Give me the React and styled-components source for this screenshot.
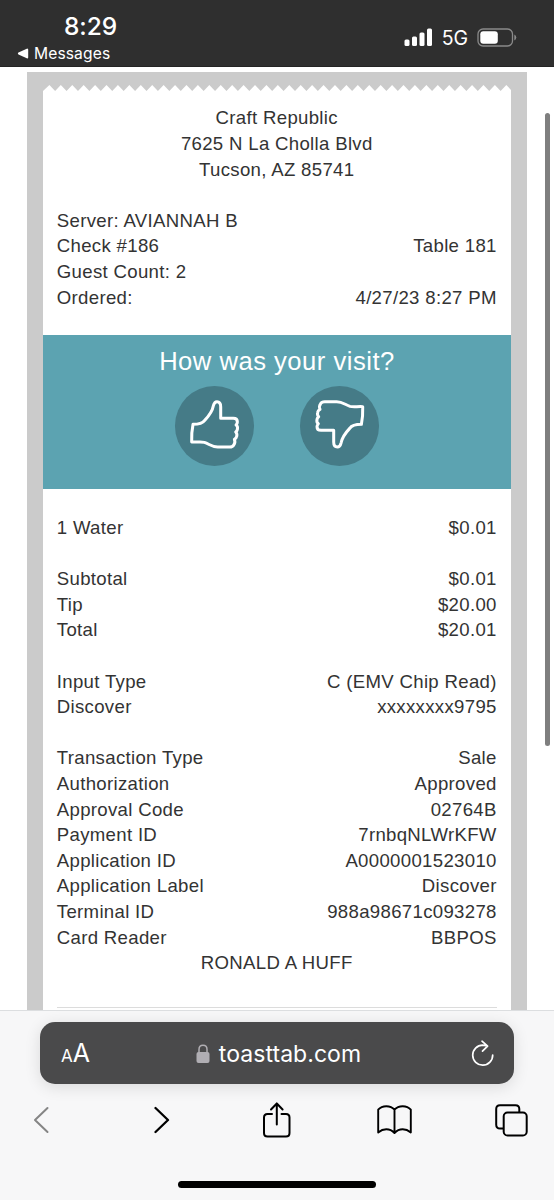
import styled, { createGlobalStyle } from "styled-components";

const colors = {
  chrome: "#2f2f2f",
  frame: "#cbcbcb",
  text: "#333",
  teal: "#5ca3b1",
  tealDark: "#457b87",
  address: "#4a4a4b",
  toolbar: "#f7f7f8",
};

const GlobalStyle = createGlobalStyle`
  * { box-sizing: border-box; }
  body {
    margin: 0;
    background: #fff;
    font-family: "Liberation Sans", Arial, sans-serif;
  }
`;

const Screen = styled.div`
  display: flex;
  flex-direction: column;
  width: 554px;
  height: 1200px;
  overflow: hidden;
`;

const StatusBar = styled.header`
  display: flex;
  justify-content: space-between;
  height: 67px;
  flex: none;
  background: ${colors.chrome};
  border-bottom: 1px solid #242424;
  color: #fff;
  font-family: Inter, sans-serif;
`;

const StatusLeft = styled.div`
  padding: 11px 0 0 17px;
`;

const Clock = styled.div`
  padding-left: 47px;
  font-size: 24.5px;
  line-height: 30px;
  font-weight: 500;
  letter-spacing: -0.1px;
`;

const BackLink = styled.div`
  display: flex;
  align-items: center;
  gap: 5px;
  font-size: 15.6px;
  line-height: 25px;
  letter-spacing: 0.12px;
`;

const StatusRight = styled.div`
  display: flex;
  align-items: center;
  height: 27px;
  margin-top: 23.5px;
  padding-right: 37px;
`;

const Network = styled.span`
  margin: 0 9px 0 9px;
  padding-top: 1px;
  font-size: 19.5px;
  letter-spacing: -0.1px;
`;

const Page = styled.main`
  position: relative;
  height: 943px;
  flex: none;
  padding: 5px 27px 0;
  overflow: hidden;
`;

const Frame = styled.div`
  height: 100%;
  padding: 13px 15.7px 0 15.6px;
  background: ${colors.frame};
`;

const TornEdge = styled.svg`
  display: block;
  width: 100%;
  height: 6px;
`;

const Paper = styled.section`
  height: 100%;
  padding-top: 14.4px;
  background: #fff;
  color: ${colors.text};
  font-size: 18.6px;
  line-height: 25.6px;
  letter-spacing: 0.32px;
`;

const Lines = styled.div`
  padding: 0 14.6px 25.6px 14.2px;
`;

const Row = styled.div`
  display: flex;
  justify-content: space-between;
  min-height: 25.6px;
  white-space: nowrap;
`;

const Centered = styled.div`
  text-align: center;
`;

const Survey = styled.div`
  height: 153.4px;
  margin: -0.6px 0 26.5px;
  padding-top: 9.8px;
  background: ${colors.teal};
  color: #fff;
  text-align: center;
`;

const Question = styled.div`
  font-size: 25.6px;
  line-height: 32px;
  letter-spacing: 0.5px;
`;

const Votes = styled.div`
  display: flex;
  justify-content: center;
  gap: 45.6px;
  margin-top: 9.4px;
`;

const Vote = styled.button`
  width: 79.4px;
  height: 79.4px;
  padding: 0;
  border: none;
  border-radius: 50%;
  background: ${colors.tealDark};

  svg {
    display: block;
    width: 100%;
    height: 100%;
  }
`;

const Divider = styled.hr`
  height: 1px;
  margin: 6px 14px 0;
  border: none;
  background: #dcdcdc;
`;

const ScrollThumb = styled.div`
  position: absolute;
  top: 46px;
  right: 4px;
  width: 5px;
  height: 633px;
  border-radius: 3px;
  background: #7f7f7f;
`;

const BottomBar = styled.footer`
  flex: 1;
  padding: 11px 40px 0;
  border-top: 1px solid #dcdee0;
  background: ${colors.toolbar};
`;

const AddressBar = styled.div`
  display: grid;
  grid-template-columns: 1fr auto 1fr;
  align-items: center;
  height: 62px;
  padding: 0 20px 0 21px;
  border-radius: 15px;
  background: ${colors.address};
  box-shadow: 0 3px 16px rgba(0, 0, 0, 0.12);
  color: #fff;
  font-family: Inter, sans-serif;
`;

const TextSize = styled.div`
  font-size: 25px;
  line-height: 30px;
  padding-top: 3px;

  small {
    font-size: 17px;
  }
`;

const Domain = styled.div`
  display: flex;
  align-items: center;
  gap: 9px;
  padding: 2px 0 0 2px;
  font-size: 23px;
  letter-spacing: 0.05px;
`;

const Reload = styled.svg`
  justify-self: end;
`;

const Tools = styled.nav`
  display: flex;
  justify-content: space-between;
  align-items: center;
  height: 40px;
  margin: 16px -15px 0 -17px;
`;

const Tool = styled.span`
  display: flex;
  justify-content: center;
  width: 36px;
  padding-left: ${({ $nudge = 0 }) => $nudge}px;
`;

const HomeIndicator = styled.div`
  width: 198px;
  height: 7px;
  margin: 41px auto 0;
  border-radius: 4px;
  background: #000;
`;

const TEETH = 41;
const TOOTH = 11.43;

function teethPath() {
  let d = "M0 6";
  for (let i = 0; i < TEETH; i++) {
    d += ` L${i * TOOTH + 6.4} 0 L${(i + 1) * TOOTH + 0.7} 6`;
  }
  return `${d} V6 Z`;
}

function Thumb({ down }) {
  return (
    <svg viewBox="0 0 238 238" fill="none" stroke="#fff" strokeWidth="9" strokeLinejoin="round">
      <path
        transform={down ? "rotate(180 119 115)" : undefined}
        d="M50 168 Q49 140 54 115 C70 115 82 113 89 103 C104 87 112 76 115 59 C117 51 119 47 126 47 C134 47 137 52 137 62 V97 H175 Q187 97 187 108 Q187 113 183 117 Q189 120 187 130 Q186 135 182 138 Q187 143 185 151 Q184 157 178 160 Q182 169 176 177 Q173 183 164 183 H128 C111 183 103 174 88 169 C78 166 66 169 50 168 Z"
      />
    </svg>
  );
}

const server = [
  ["Server: AVIANNAH B", ""],
  ["Check #186", "Table 181"],
  ["Guest Count: 2", ""],
  ["Ordered:", "4/27/23 8:27 PM"],
];

const sections = [
  [["1 Water", "$0.01"]],
  [
    ["Subtotal", "$0.01"],
    ["Tip", "$20.00"],
    ["Total", "$20.01"],
  ],
  [
    ["Input Type", "C (EMV Chip Read)"],
    ["Discover", "xxxxxxxx9795"],
  ],
  [
    ["Transaction Type", "Sale"],
    ["Authorization", "Approved"],
    ["Approval Code", "02764B"],
    ["Payment ID", "7rnbqNLWrKFW"],
    ["Application ID", "A0000001523010"],
    ["Application Label", "Discover"],
    ["Terminal ID", "988a98671c093278"],
    ["Card Reader", "BBPOS"],
  ],
];

function Rows({ items }) {
  return items.map(([label, value]) => (
    <Row key={label}>
      <span>{label}</span>
      <span>{value}</span>
    </Row>
  ));
}

function PhoneStatus() {
  return (
    <StatusBar>
      <StatusLeft>
        <Clock>8:29</Clock>
        <BackLink>
          <svg width="12" height="11" viewBox="0 0 12 11">
            <path d="M1.9 5.5 L10.2 1.6 V9.4 Z" fill="#fff" stroke="#fff" strokeWidth="2" strokeLinejoin="round" />
          </svg>
          Messages
        </BackLink>
      </StatusLeft>
      <StatusRight>
        <svg width="29" height="19" viewBox="0 0 29 19" fill="#fff">
          <rect x="0.5" y="11.5" width="5" height="6.5" rx="1.5" />
          <rect x="8" y="8.5" width="5" height="9.5" rx="1.5" />
          <rect x="15.5" y="4.5" width="5" height="13.5" rx="1.5" />
          <rect x="23" y="0.5" width="5" height="17.5" rx="1.5" />
        </svg>
        <Network>5G</Network>
        <svg width="40" height="19" viewBox="0 0 40 19">
          <rect x="1" y="1" width="34.5" height="17" rx="5" fill="none" stroke="#8a8a8a" strokeWidth="1.3" />
          <rect x="3.3" y="3.2" width="17.5" height="12.6" rx="3" fill="#fff" />
          <path d="M37.3 6.5 Q39.3 7.5 39.3 9.5 Q39.3 11.5 37.3 12.5 Z" fill="#8a8a8a" />
        </svg>
      </StatusRight>
    </StatusBar>
  );
}

function Receipt() {
  return (
    <Frame>
      <TornEdge viewBox="0 0 469 6" preserveAspectRatio="none">
        <path d={teethPath()} fill="#fff" />
      </TornEdge>
      <Paper>
        <Lines>
          <Centered>
            Craft Republic
            <br />
            7625 N La Cholla Blvd
            <br />
            Tucson, AZ 85741
          </Centered>
        </Lines>
        <Lines>
          <Rows items={server} />
        </Lines>
        <Survey>
          <Question>How was your visit?</Question>
          <Votes>
            <Vote aria-label="Good"><Thumb /></Vote>
            <Vote aria-label="Bad"><Thumb down /></Vote>
          </Votes>
        </Survey>
        {sections.slice(0, 3).map((items) => (
          <Lines key={items[0][0]}>
            <Rows items={items} />
          </Lines>
        ))}
        <Lines>
          <Rows items={sections[3]} />
          <Centered>RONALD A HUFF</Centered>
        </Lines>
        <Divider />
      </Paper>
    </Frame>
  );
}

function BrowserBar() {
  return (
    <BottomBar>
      <AddressBar>
        <TextSize><small>A</small>A</TextSize>
        <Domain>
          <svg width="14" height="20" viewBox="0 0 14 20">
            <rect x="0.5" y="8" width="13" height="11" rx="2" fill="#b0aeb3" />
            <path d="M3 9 V5.5 Q3 1.3 7 1.3 Q11 1.3 11 5.5 V9" fill="none" stroke="#b0aeb3" strokeWidth="1.5" />
          </svg>
          toasttab.com
        </Domain>
        <Reload width="23" height="27" viewBox="0 0 23 27" fill="none" stroke="#fff" strokeWidth="1.7" strokeLinecap="round" strokeLinejoin="round">
          <path d="M21.7 15 A10 10 0 1 1 11.7 5.2 L16.5 6 M11 1.2 L16.6 6.1 L11.5 11.2" />
        </Reload>
      </AddressBar>
      <Tools>
        <Tool>
          <svg width="16" height="28" viewBox="0 0 16 28" fill="none" stroke="#858585" strokeWidth="2" strokeLinecap="round" strokeLinejoin="round">
            <path d="M14.5 2 L2 14 L14.5 26" />
          </svg>
        </Tool>
        <Tool $nudge={6}>
          <svg width="16" height="28" viewBox="0 0 16 28" fill="none" stroke="#000" strokeWidth="2.3" strokeLinecap="round" strokeLinejoin="round">
            <path d="M1.5 2 L14 14 L1.5 26" />
          </svg>
        </Tool>
        <Tool $nudge={2}>
          <svg width="28" height="36" viewBox="0 0 28 36" fill="none" stroke="#000" strokeWidth="2" strokeLinecap="round" strokeLinejoin="round">
            <path d="M9 12 H4.5 Q1 12 1 15.5 V31 Q1 34.5 4.5 34.5 H23 Q26.5 34.5 26.5 31 V15.5 Q26.5 12 23 12 H18.5 M13.8 22.5 V1.5 M8 7.5 L13.8 1.5 L19.6 7.5" />
          </svg>
        </Tool>
        <Tool $nudge={1}>
          <svg width="35" height="30" viewBox="0 0 35 30" fill="none" stroke="#000" strokeWidth="1.9" strokeLinejoin="round">
            <path d="M17.5 4.7 Q14.5 1.2 9.3 1.2 Q4.2 1.2 1.2 4.7 V27.5 Q5 24.3 9.3 24.3 Q14 24.3 17.5 28 Q21 24.3 25.7 24.3 Q30 24.3 33.8 27.5 V4.7 Q30.8 1.2 25.7 1.2 Q20.5 1.2 17.5 4.7 V28" />
          </svg>
        </Tool>
        <Tool>
          <svg width="33" height="33" viewBox="0 0 33 33" fill="none" stroke="#000" strokeWidth="2">
            <path d="M8.5 24.5 H5 Q1.2 24.5 1.2 20.7 V5 Q1.2 1.2 5 1.2 H20.5 Q24.3 1.2 24.3 5 V8.5" />
            <rect x="8.7" y="8.5" width="23" height="23" rx="3.8" />
          </svg>
        </Tool>
      </Tools>
      <HomeIndicator />
    </BottomBar>
  );
}

export default function App() {
  return (
    <Screen>
      <GlobalStyle />
      <PhoneStatus />
      <Page>
        <Receipt />
        <ScrollThumb />
      </Page>
      <BrowserBar />
    </Screen>
  );
}
